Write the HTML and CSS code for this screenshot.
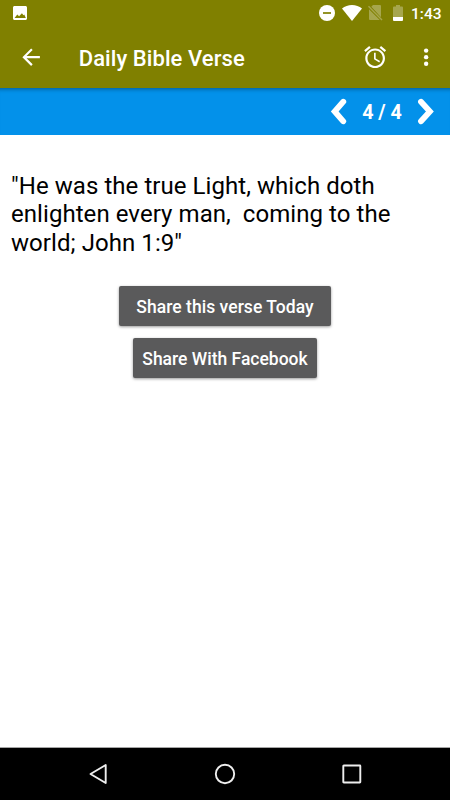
FILE: index.html
```
<!DOCTYPE html>
<html lang="en">
<head>
    <meta charset="UTF-8">
    <meta name="viewport" content="width=device-width, initial-scale=1.0">
    <title>Daily Bible Verse</title>
    <link rel="stylesheet" href="styles.css">
</head>
<body>
    <!-- Status bar -->
    <div class="status-bar">
        <svg class="status-image" viewBox="3 3 18 18"><path fill="#fff" d="M21 19V5c0-1.100-.9-2-2-2H5c-1.100 0-2 .9-2 2v14c0 1.100.9 2 2 2h14c1.100 0 2-.9 2-2zM5 18.500L8.500 14l2.300 2.300 3.700-4L16.500 15l1-1 2 4.500z"/></svg>
        <div class="status-icons">
            <svg width="16" height="16" viewBox="0 0 16 16"><circle cx="8" cy="8" r="8" fill="#fff"/><path d="M4 8h8" stroke="#808000" stroke-width="1.700"/></svg>
            <svg class="wifi" width="20" height="16" viewBox="0 0 20 16"><path fill="#fff" d="M10 16L0 3.600C2.800 1.300 6.200 0 10 0s7.200 1.300 10 3.600z"/></svg>
            <svg class="sim" width="15" height="16" viewBox="0 0 15 16"><path fill="#a6a64d" d="M5 0h7q1 0 1 1v11.300L3.300 1.700zM1 4.200L11.800 15H2q-1 0-1-1z"/><path d="M.5 1.300L14 15" stroke="#a6a64d" stroke-width="1.400"/></svg>
            <svg class="battery" width="10" height="16" viewBox="0 0 10 16"><path fill="#a6a64d" d="M3 0h4v1.600h2q1 0 1 1V12H0V2.600q0-1 1-1h2z"/><path fill="#fff" d="M0 12h10v3q0 1-1 1H1q-1 0-1-1z"/></svg>
            <span class="time">1:43</span>
        </div>
    </div>

    <!-- App bar -->
    <header class="app-bar">
        <svg class="icon" viewBox="0 0 24 24"><path fill="#fff" d="M20 11H7.830l5.590-5.590L12 4l-8 8 8 8 1.410-1.410L7.830 13H20v-2z"/></svg>
        <h1>Daily Bible Verse</h1>
        <svg class="icon alarm" viewBox="0 0 24 24"><path fill="#fff" d="M22 5.720l-4.600-3.860-1.290 1.530 4.600 3.860L22 5.720zM7.880 3.390L6.600 1.860 2 5.710l1.290 1.530 4.590-3.850zM12.500 8H11v6l4.750 2.850.75-1.230-4-2.370V8zM12 4c-4.970 0-9 4.030-9 9s4.020 9 9 9c4.970 0 9-4.030 9-9s-4.030-9-9-9zm0 16c-3.870 0-7-3.130-7-7s3.130-7 7-7 7 3.130 7 7-3.130 7-7 7z"/></svg>
        <svg class="icon more" viewBox="0 0 24 24"><g fill="#fff"><circle cx="12" cy="6" r="2"/><circle cx="12" cy="12" r="2"/><circle cx="12" cy="18" r="2"/></g></svg>
    </header>

    <!-- Verse pager -->
    <div class="pager">
        <svg width="17" height="27" viewBox="0 0 17 27"><path d="M13.300 3.700L4.700 13.500l8.600 9.800"/></svg>
        <span class="count">4 / 4</span>
        <svg width="17" height="27" viewBox="0 0 17 27"><path d="M4 3.700l8.900 9.800L4 23.300"/></svg>
    </div>

    <main class="content">
        <p class="verse">"He was the true Light, which doth
enlighten every man,  coming to the
world; John 1:9"</p>
        <button class="share share-today">Share this verse Today</button>
        <button class="share share-facebook">Share With Facebook</button>
    </main>

    <!-- System navigation -->
    <nav class="nav-bar">
        <svg width="22" height="22" viewBox="0 0 22 22"><path d="M18.700 2v18L3.500 11z"/></svg>
        <svg width="22" height="22" viewBox="0 0 22 22"><circle cx="11" cy="11" r="9.200"/></svg>
        <svg width="22" height="22" viewBox="0 0 22 22"><rect x="2.300" y="2.500" width="17" height="17" rx=".5"/></svg>
    </nav>
</body>
</html>
```
FILE: styles.css
```
* {
    box-sizing: border-box;
}

body {
    font-family: Roboto, sans-serif;
    margin: 0;
    height: 100vh;
    overflow: hidden;
    display: flex;
    flex-direction: column;
    background-color: #ffffff;
}

svg {
    display: block;
    flex-shrink: 0;
}

/* Status bar */
.status-bar {
    display: flex;
    align-items: center;
    justify-content: space-between;
    height: 26px;
    padding: 0 9px 0 13px;
    background-color: #808000;
}

.status-image {
    width: 14px;
    height: 14px;
}

.status-icons {
    display: flex;
    align-items: center;
}

.wifi {
    margin-left: 7px;
}

.sim {
    margin-left: 6px;
}

.battery {
    margin-left: 10px;
}

.time {
    width: 30px;
    height: 26px;
    margin-left: 8px;
    color: white;
    font-size: 15.500px;
    font-weight: 500;
    line-height: 28px;
    white-space: nowrap;
}

/* App bar */
.app-bar {
    display: flex;
    align-items: center;
    height: 62px;
    padding: 0 11px 0 17.500px;
    background-color: #808000;
}

.icon {
    width: 26.250px;
    height: 26.250px;
}

.app-bar h1 {
    flex: 1;
    margin: 0 0 0 35px;
    padding-top: 2px;
    color: white;
    font-size: 22px;
    font-weight: 500;
    letter-spacing: 0.07px;
}

.more {
    margin-left: 24.500px;
}

/* Verse pager */
.pager {
    display: flex;
    align-items: center;
    justify-content: flex-end;
    height: 47px;
    padding-right: 16px;
    background-color: #0391ea;
    box-shadow: inset 0 5px 4px -4px rgba(0, 0, 0, 0.4);
}

.pager path {
    fill: none;
    stroke: white;
    stroke-width: 5.800;
    stroke-linecap: round;
    stroke-linejoin: miter;
}

.count {
    width: 40px;
    margin: 0 15px;
    padding-top: 2px;
    color: white;
    font-size: 19.700px;
    font-weight: 700;
    text-align: center;
    white-space: nowrap;
}

/* Verse and share buttons */
.content {
    flex: 1;
    display: flex;
    flex-direction: column;
    align-items: center;
    padding: 37px 11px 0;
}

.verse {
    align-self: stretch;
    margin: 0 0 29px;
    color: black;
    font-size: 24px;
    letter-spacing: 0.06px;
    line-height: 28.300px;
    white-space: pre;
}

.share {
    height: 40px;
    padding: 2px 0 0;
    border: none;
    border-radius: 2px;
    background-color: #5a5a5b;
    box-shadow: 0 1px 3px rgba(0, 0, 0, 0.4);
    color: white;
    font-family: inherit;
    font-size: 17.500px;
    font-weight: 500;
    white-space: nowrap;
}

.share-today {
    width: 212px;
    margin-bottom: 12.500px;
    letter-spacing: 0.04px;
}

.share-facebook {
    width: 184px;
}

/* System navigation */
.nav-bar {
    display: flex;
    align-items: center;
    justify-content: space-between;
    height: 53px;
    padding: 0 87px;
    border-top: 1px solid #a5a5a5;
    background-color: black;
}

.nav-bar svg * {
    fill: none;
    stroke: #eeeeee;
    stroke-width: 1.900;
    stroke-linejoin: round;
}
```
